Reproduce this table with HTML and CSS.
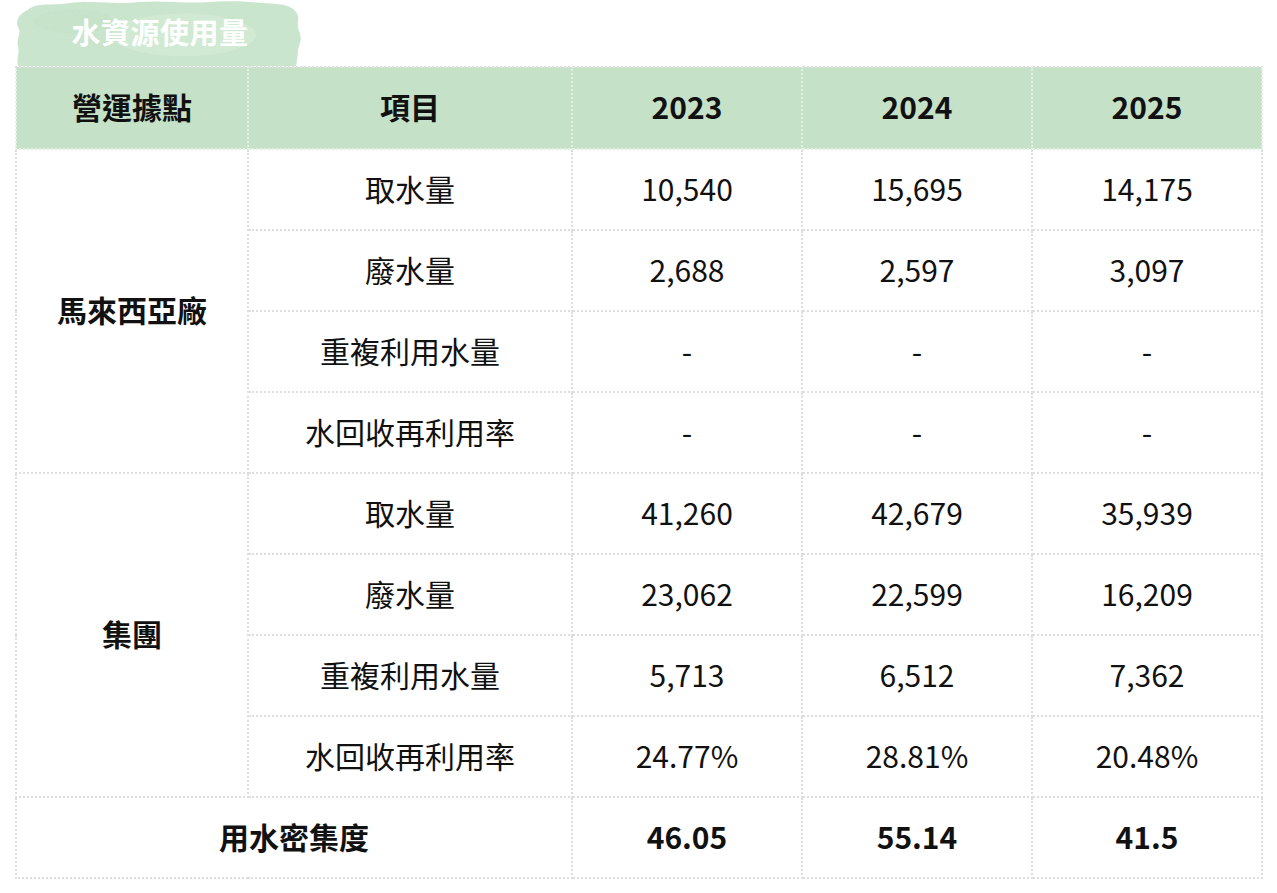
FILE: index.html
```html
<!DOCTYPE html>
<html lang="zh-Hant">
<head>
<meta charset="utf-8">
<title>水資源使用量</title>
<link rel="stylesheet" href="styles.css">
</head>
<body>
<div class="wrap">
  <div class="badge">
    <svg class="badge-bg" viewBox="0 0 288 68" preserveAspectRatio="none" aria-hidden="true">
      <defs>
        <filter id="wc" x="0" y="0" width="100%" height="100%">
          <feTurbulence type="fractalNoise" baseFrequency="0.7" numOctaves="2" seed="3" result="n"/>
          <feColorMatrix in="n" type="matrix" values="0 0 0 0 1  0 0 0 0 1  0 0 0 0 1  0 0 0 0.12 0" result="w"/>
          <feComposite in="w" in2="SourceGraphic" operator="in" result="wt"/>
          <feMerge><feMergeNode in="SourceGraphic"/><feMergeNode in="wt"/></feMerge>
        </filter>
      </defs>
      <g filter="url(#wc)">
        <path d="M14 10 C22 2 40 6 56 3 C80 0 100 5 124 2 C150 0 172 4 196 2 C222 0 246 3 262 4 C278 5 286 12 284 22 C282 30 289 36 286 44 C283 52 284 60 282 68 L4 68 C2 60 6 54 4 48 C2 40 8 34 4 28 C1 20 6 14 14 10 Z" fill="#c6e3c9"/>
        <ellipse cx="170" cy="36" rx="72" ry="22" fill="#d1e9d3" opacity="0.7"/>
        <ellipse cx="60" cy="22" rx="40" ry="12" fill="#bfdfc3" opacity="0.5"/>
      </g>
    </svg>
    <span class="badge-text">水資源使用量</span>
  </div>
  <table class="data">
    <colgroup>
      <col class="c-site"><col class="c-item"><col class="c-year"><col class="c-year"><col class="c-year">
    </colgroup>
    <thead>
      <tr><th>營運據點</th><th>項目</th><th>2023</th><th>2024</th><th>2025</th></tr>
    </thead>
    <tbody>
      <tr><td rowspan="4" class="site">馬來西亞廠</td><td>取水量</td><td>10,540</td><td>15,695</td><td>14,175</td></tr>
      <tr><td>廢水量</td><td>2,688</td><td>2,597</td><td>3,097</td></tr>
      <tr><td>重複利用水量</td><td>-</td><td>-</td><td>-</td></tr>
      <tr><td>水回收再利用率</td><td>-</td><td>-</td><td>-</td></tr>
      <tr><td rowspan="4" class="site">集團</td><td>取水量</td><td>41,260</td><td>42,679</td><td>35,939</td></tr>
      <tr><td>廢水量</td><td>23,062</td><td>22,599</td><td>16,209</td></tr>
      <tr><td>重複利用水量</td><td>5,713</td><td>6,512</td><td>7,362</td></tr>
      <tr><td>水回收再利用率</td><td>24.77%</td><td>28.81%</td><td>20.48%</td></tr>
      <tr class="total"><td colspan="2">用水密集度</td><td>46.05</td><td>55.14</td><td>41.5</td></tr>
    </tbody>
  </table>
</div>
</body>
</html>
```

FILE: styles.css
```css
html, body {
  margin: 0;
  padding: 0;
  background: #ffffff;
}
body {
  font-family: "Noto Sans CJK TC", "Noto Sans", sans-serif;
  color: #111111;
}
.wrap {
  padding: 0 16px 0 15px;
}
.badge {
  position: relative;
  width: 288px;
  height: 66px;
  margin-left: -1px;
  display: flex;
  align-items: center;
  justify-content: center;
}
.badge-bg {
  position: absolute;
  inset: 0;
  width: 100%;
  height: 100%;
}
.badge-text {
  position: relative;
  color: #ffffff;
  font-size: 29px;
  font-weight: 700;
  letter-spacing: 0.5px;
  margin-top: -4px;
  margin-left: 4px;
}
.data {
  width: 1246px;
  border-collapse: collapse;
  table-layout: fixed;
}
.c-site { width: 232px; }
.c-item { width: 324px; }
.c-year { width: 230px; }
.data th, .data td {
  border: 2px dotted #dedede;
  text-align: center;
  vertical-align: middle;
  padding: 0 0 4px 0;
  font-size: 30px;
  line-height: 1;
}
.data th {
  height: 76px;
  background: #c5e2c8;
  font-weight: 700;
  border-color: #e4efe5;
}
.data thead th {
  border-top-color: #dedede;
}
.data td {
  height: 75px;
  font-weight: 400;
}
.data td.site,
.total td {
  font-weight: 700;
}
```
